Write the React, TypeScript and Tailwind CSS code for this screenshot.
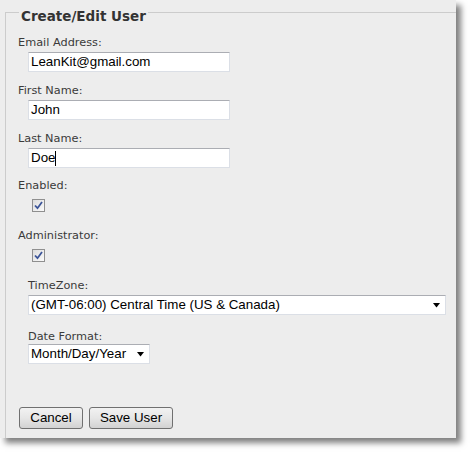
import React from "react";

const label = "block text-[11.3px] leading-[14px] text-[#3a3a3a]";
const box =
  "flex items-center h-[20px] bg-white border border-[#dbdfe6] border-t-[#abadb3] px-[1px] text-[13.33px] text-black [font-family:'Liberation_Sans',Arial,sans-serif]";

function TextBox({ value, caret }: { value: string; caret?: boolean }) {
  return (
    <div className={`${box} ml-[10px] mt-[2px] w-[202px]`}>
      <span className="pl-[1px]">{value}</span>
      {caret && <span className="w-px h-[15px] bg-black" />}
    </div>
  );
}

function Check() {
  return (
    <span className="mt-[6px] ml-[14px] flex h-[13px] w-[13px] items-center justify-center border border-[#8f8f8f] bg-gradient-to-br from-[#dcdcdc] to-[#fbfbfb]">
      <svg width="9" height="9" viewBox="0 0 9 9">
        <path d="M1 4.5 L3.5 7.2 L8 1" fill="none" stroke="#3b5498" strokeWidth="1.8" />
      </svg>
    </span>
  );
}

function Select({ value, width }: { value: string; width: string }) {
  return (
    <div className={`${box} ml-[10px] ${width} justify-between`}>
      <span className="pl-[1px]">{value}</span>
      <svg width="7" height="5" viewBox="0 0 7 5" className="mr-[4px]">
        <path d="M0 0 H7 L3.5 4.5 Z" fill="#000" />
      </svg>
    </div>
  );
}

function Button({ children, width }: { children: React.ReactNode; width: string }) {
  return (
    <button
      className={`${width} h-[22px] rounded-[3px] border border-[#707070] bg-gradient-to-b from-[#f2f2f2] via-[#e6e6e6] to-[#d2d2d2] text-[13.33px] text-black [font-family:'Liberation_Sans',Arial,sans-serif]`}
    >
      {children}
    </button>
  );
}

export default function App() {
  return (
    <div className="w-[472px] h-[455px] bg-white [font-family:'DejaVu_Sans',Verdana,sans-serif]">
      <div className="w-[456px] h-[438px] overflow-hidden bg-[#ededed] shadow-[5px_5px_6px_rgba(0,0,0,0.5)]">
        <fieldset className="mt-[1px] ml-[5px] w-[470px] h-[460px] border-0 border-t border-l border-[#cccccc] pl-[12px] pt-[12px]">
          <legend className="ml-[1px] px-[2px] pt-[7px] text-[13.5px] leading-[16px] font-bold text-[#333]">
            Create/Edit User
          </legend>

          <label className={label}>Email Address:</label>
          <TextBox value="LeanKit@gmail.com" />

          <label className={`${label} mt-[12px]`}>First Name:</label>
          <TextBox value="John" />

          <label className={`${label} mt-[12px]`}>Last Name:</label>
          <TextBox value="Doe" caret />

          <label className={`${label} mt-[11px]`}>Enabled:</label>
          <Check />

          <label className={`${label} mt-[17px]`}>Administrator:</label>
          <Check />

          <label className={`${label} mt-[17px] ml-[10px]`}>TimeZone:</label>
          <div className="mt-[2px]">
            <Select value="(GMT-06:00) Central Time (US & Canada)" width="w-[418px]" />
          </div>

          <label className={`${label} mt-[15px] ml-[10px]`}>Date Format:</label>
          <Select value="Month/Day/Year" width="w-[122px]" />

          <div className="mt-[43px] ml-[1px] flex gap-[6px]">
            <Button width="w-[64px]">Cancel</Button>
            <Button width="w-[84px]">Save User</Button>
          </div>
        </fieldset>
      </div>
    </div>
  );
}
